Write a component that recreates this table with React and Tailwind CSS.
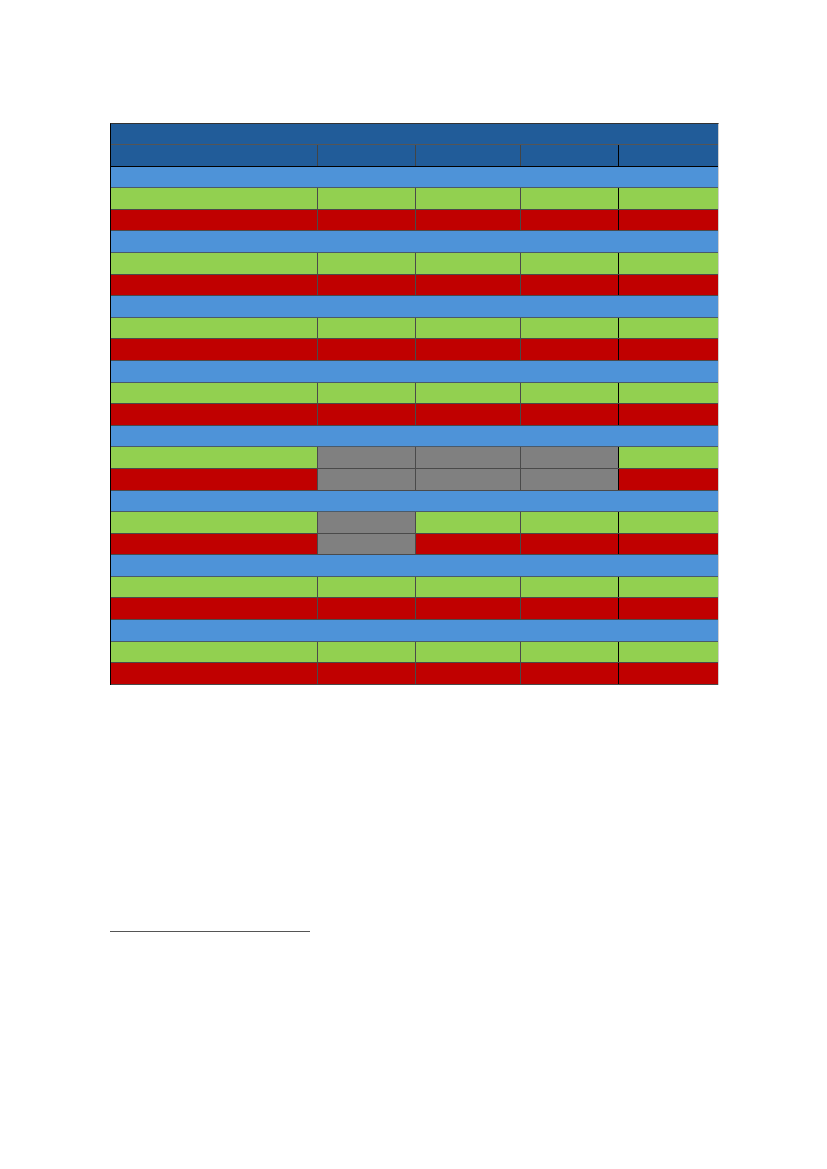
import React from "react";

const cols = ["w-[207px]", "w-[98px]", "w-[106px]", "w-[98px]", "w-[99px]"];

const colors = {
  g: "bg-[#92d050]",
  r: "bg-[#c00000]",
  x: "bg-[#808080]",
};

// each group: light blue band, then a green row and a red row
const groups = [
  { g: "ggggg", r: "rrrrr" },
  { g: "ggggg", r: "rrrrr" },
  { g: "ggggg", r: "rrrrr" },
  { g: "ggggg", r: "rrrrr" },
  { g: "gxxxg", r: "rxxxr" },
  { g: "gxggg", r: "rxrrr" },
  { g: "ggggg", r: "rrrrr" },
  { g: "ggggg", r: "rrrrr" },
];

function Row({ pattern }) {
  return (
    <div className="flex h-[21.6px] border-b border-[#4a4a4a]">
      {pattern.split("").map((c, i) => (
        <div
          key={i}
          className={`${cols[i]} ${colors[c]} ${
            i < 4 ? (i === 3 ? "border-r border-black" : "border-r border-[#4a4a4a]") : ""
          }`}
        />
      ))}
    </div>
  );
}

export default function App() {
  return (
    <div className="min-h-[1169px] bg-white pt-[123px] pl-[110px] font-['Liberation_Sans',sans-serif]">
      <div className="w-[609px] border-l border-black border-t border-t-[#333] border-r border-r-[#cfcfcf]">
        <div className="h-[21px] bg-[#215c99] border-b border-[#555]" />
        <div className="flex h-[21.6px] bg-[#215c99] border-b border-black">
          {cols.map((w, i) => (
            <div
              key={i}
              className={`${w} ${i < 4 ? (i === 3 ? "border-r border-black" : "border-r border-[#444]") : ""}`}
            />
          ))}
        </div>
        {groups.map((grp, k) => (
          <React.Fragment key={k}>
            <div className="h-[21.6px] bg-[#4e93d8] border-b border-[#4a5a6a]" />
            <Row pattern={grp.g} />
            <Row pattern={grp.r} />
          </React.Fragment>
        ))}
      </div>
      <div className="mt-[246px] w-[200px] h-px bg-[#555]" />
    </div>
  );
}
